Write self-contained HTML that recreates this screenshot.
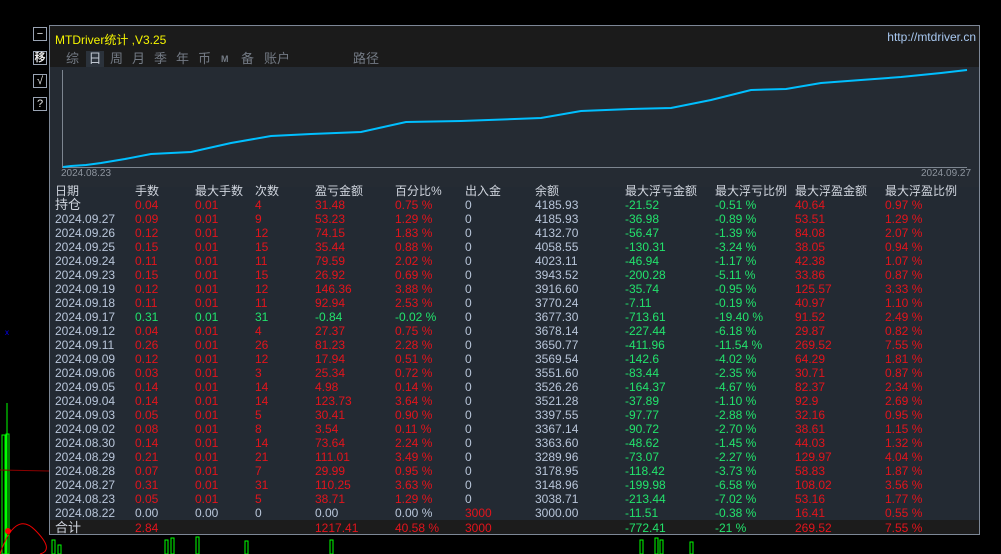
<!DOCTYPE html>
<html><head><meta charset="utf-8"><style>
*{margin:0;padding:0;box-sizing:border-box}
body{width:1001px;height:554px;background:#000;position:relative;overflow:hidden;font-family:"Liberation Sans","Noto Sans CJK SC",sans-serif}
.btn{position:absolute;left:33px;width:14px;height:14px;border:1px solid #9aa4b4;color:#e8e8e8;font-size:11px;line-height:12px;text-align:center;background:#000}
#panel{position:absolute;left:49px;top:25px;width:931px;height:510px;border:1px solid #7d8796;background:#232a33;overflow:hidden}
#title{position:absolute;left:0;top:0;width:100%;height:41px;background:#1b1b1b}
.t{position:absolute;white-space:nowrap}
.tab{position:absolute;top:25px;font-size:13px;color:#737a84;white-space:nowrap;line-height:16px}
.row{position:absolute;left:0;width:100%;height:14px;font-size:12px;line-height:14px}
.row span{position:absolute;top:0;white-space:nowrap}
.r{color:#e3141c}.g{color:#22e36c}.w{color:#b9c6da}
.hd{color:#d0d5de;font-size:12px}
</style></head><body>
<div class="btn" style="top:27px">−</div>
<div class="btn" style="top:51px;font-weight:bold">移</div>
<div class="btn" style="top:74px">√</div>
<div class="btn" style="top:97px">?</div>
<svg style="position:absolute;left:0;top:0" width="1001" height="554">
<line x1="7" y1="403" x2="7" y2="554" stroke="#00ff00" stroke-width="1"/>
<rect x="2" y="435" width="3" height="119" fill="none" stroke="#00ff00"/>
<rect x="6" y="434" width="3" height="120" fill="none" stroke="#00ff00"/>
<line x1="0" y1="470" x2="49" y2="471" stroke="#8b0000"/>
<path d="M0 554 Q15 510 35 530 T40 554" fill="none" stroke="#e00" />
<circle cx="8" cy="531" r="3" fill="#f00"/>
<text x="5" y="335" fill="#0000ff" font-size="8">x</text>
<g stroke="#00ff00" fill="none">
<rect x="52" y="540" width="3" height="14"/><rect x="58" y="545" width="3" height="9"/><rect x="165" y="540" width="3" height="14"/><rect x="171" y="538" width="3" height="16"/>
<rect x="196" y="537" width="3" height="17"/><rect x="245" y="541" width="3" height="13"/><rect x="330" y="540" width="3" height="14"/><rect x="640" y="540" width="3" height="14"/><rect x="655" y="538" width="3" height="16"/><rect x="660" y="540" width="3" height="14"/><rect x="690" y="542" width="3" height="12"/>
</g>
</svg>
<div id="panel">
<div id="title"></div>
<div class="t" style="left:5px;top:5px;font-size:12px;color:#f5f500">MTDriver统计 ,V3.25</div>
<div class="t" style="right:3px;top:4px;font-size:12px;color:#a8c8f0">http://mtdriver.cn</div>
<div class="tab" style="left:16px">综</div>
<div class="tab" style="left:36px;width:18px;background:#2b323b;color:#bfc6d0;text-align:center">日</div>
<div class="tab" style="left:60px">周</div>
<div class="tab" style="left:82px">月</div>
<div class="tab" style="left:104px">季</div>
<div class="tab" style="left:126px">年</div>
<div class="tab" style="left:148px">币</div>
<div class="tab" style="left:171px;font-size:9px;font-weight:bold">M</div>
<div class="tab" style="left:191px">备</div>
<div class="tab" style="left:214px">账户</div>
<div class="tab" style="left:303px">路径</div>
<svg style="position:absolute;left:0;top:41px" width="931" height="120">
<rect x="0" y="0" width="931" height="120" fill="#252b33"/>
<line x1="12.5" y1="3" x2="12.5" y2="100" stroke="#7d8590"/>
<line x1="12" y1="100.5" x2="917" y2="100.5" stroke="#7d8590"/>
<polyline fill="none" stroke="#00bfff" stroke-width="2" points="13,100 21,99 36,98 51,96 75,92 101,87 141,85 181,76 221,69 261,67 311,65 356,55 411,54 491,51 531,44 581,42 621,41 661,33 701,23 736,22 771,16 811,13 851,10 891,6 917,3"/>
</svg>
<div class="t" style="left:11px;top:142px;font-size:10px;color:#8d949e">2024.08.23</div>
<div class="t" style="left:871px;top:142px;font-size:10px;color:#8d949e">2024.09.27</div>
<div style="position:absolute;left:0;top:494px;width:100%;height:16px;background:#1c1c1c"></div>
<div id="rows"></div>
</div>
<script>
var cols=[5,85,145,205,265,345,415,485,575,665,745,835];
var hd=["日期","手数","最大手数","次数","盈亏金额","百分比%","出入金","余额","最大浮亏金额","最大浮亏比例","最大浮盈金额","最大浮盈比例"];
var d=[
["持仓","0.04","0.01","4","31.48","0.75 %","0","4185.93","-21.52","-0.51 %","40.64","0.97 %"],
["2024.09.27","0.09","0.01","9","53.23","1.29 %","0","4185.93","-36.98","-0.89 %","53.51","1.29 %"],
["2024.09.26","0.12","0.01","12","74.15","1.83 %","0","4132.70","-56.47","-1.39 %","84.08","2.07 %"],
["2024.09.25","0.15","0.01","15","35.44","0.88 %","0","4058.55","-130.31","-3.24 %","38.05","0.94 %"],
["2024.09.24","0.11","0.01","11","79.59","2.02 %","0","4023.11","-46.94","-1.17 %","42.38","1.07 %"],
["2024.09.23","0.15","0.01","15","26.92","0.69 %","0","3943.52","-200.28","-5.11 %","33.86","0.87 %"],
["2024.09.19","0.12","0.01","12","146.36","3.88 %","0","3916.60","-35.74","-0.95 %","125.57","3.33 %"],
["2024.09.18","0.11","0.01","11","92.94","2.53 %","0","3770.24","-7.11","-0.19 %","40.97","1.10 %"],
["2024.09.17","0.31","0.01","31","-0.84","-0.02 %","0","3677.30","-713.61","-19.40 %","91.52","2.49 %"],
["2024.09.12","0.04","0.01","4","27.37","0.75 %","0","3678.14","-227.44","-6.18 %","29.87","0.82 %"],
["2024.09.11","0.26","0.01","26","81.23","2.28 %","0","3650.77","-411.96","-11.54 %","269.52","7.55 %"],
["2024.09.09","0.12","0.01","12","17.94","0.51 %","0","3569.54","-142.6","-4.02 %","64.29","1.81 %"],
["2024.09.06","0.03","0.01","3","25.34","0.72 %","0","3551.60","-83.44","-2.35 %","30.71","0.87 %"],
["2024.09.05","0.14","0.01","14","4.98","0.14 %","0","3526.26","-164.37","-4.67 %","82.37","2.34 %"],
["2024.09.04","0.14","0.01","14","123.73","3.64 %","0","3521.28","-37.89","-1.10 %","92.9","2.69 %"],
["2024.09.03","0.05","0.01","5","30.41","0.90 %","0","3397.55","-97.77","-2.88 %","32.16","0.95 %"],
["2024.09.02","0.08","0.01","8","3.54","0.11 %","0","3367.14","-90.72","-2.70 %","38.61","1.15 %"],
["2024.08.30","0.14","0.01","14","73.64","2.24 %","0","3363.60","-48.62","-1.45 %","44.03","1.32 %"],
["2024.08.29","0.21","0.01","21","111.01","3.49 %","0","3289.96","-73.07","-2.27 %","129.97","4.04 %"],
["2024.08.28","0.07","0.01","7","29.99","0.95 %","0","3178.95","-118.42","-3.73 %","58.83","1.87 %"],
["2024.08.27","0.31","0.01","31","110.25","3.63 %","0","3148.96","-199.98","-6.58 %","108.02","3.56 %"],
["2024.08.23","0.05","0.01","5","38.71","1.29 %","0","3038.71","-213.44","-7.02 %","53.16","1.77 %"],
["2024.08.22","0.00","0.00","0","0.00","0.00 %","3000","3000.00","-11.51","-0.38 %","16.41","0.55 %"],
["合计","2.84","","","1217.41","40.58 %","3000","","-772.41","-21 %","269.52","7.55 %"]];
var h='<div class="row hd" style="top:158px">';
hd.forEach(function(t,i){h+='<span style="left:'+cols[i]+'px">'+t+'</span>'});h+='</div>';
d.forEach(function(r,j){
 var top=172+j*14;if(j==d.length-1)top=495;
 h+='<div class="row" style="top:'+top+'px">';
 r.forEach(function(t,i){
  var c='w';
  if(i==0){c=(j==0||j==d.length-1)?'hd':'w';}
  else if(i==6){c=(t=='3000')?'r':'w';}
  else if(i==7){c='w';}
  else if(i==8||i==9){c='g';}
  else if(i>=10){c='r';}
  else { if(r[0]=='2024.08.22')c='w'; else if(r[0]=='2024.09.17')c='g'; else c='r';}
  h+='<span class="'+c+'" style="left:'+cols[i]+'px'+(i==0&&(j==0||j==d.length-1)?';font-size:13px':'')+'">'+t+'</span>';
 });
 h+='</div>';
});
document.getElementById('rows').innerHTML=h;
</script>
</body></html>
